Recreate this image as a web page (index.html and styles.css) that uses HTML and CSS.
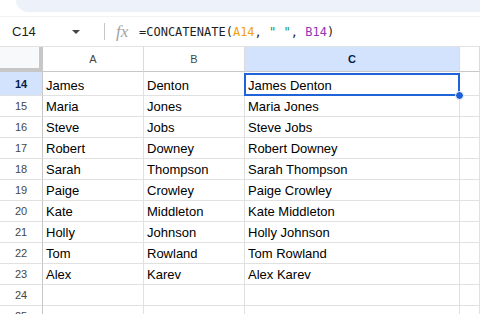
FILE: index.html
```html
<!DOCTYPE html>
<html lang="en">
<head>
    <meta charset="UTF-8">
    <title>Sheet - Concatenate</title>
    <link rel="stylesheet" href="styles.css">
</head>
<body>

    <!-- Toolbar edge -->
    <div class="toolbar"></div>

    <!-- Formula Bar -->
    <div class="formula-bar">
        <div class="name-box">
            <span class="cell-ref">C14</span>
            <span class="caret"></span>
        </div>
        <div class="divider"></div>
        <span class="fx">fx</span>
        <div class="formula">=CONCATENATE(<span class="ref-a">A14</span>, <span class="str">" "</span>, <span class="ref-b">B14</span>)</div>
    </div>

    <!-- Grid -->
    <div class="sheet">
        <div class="corner"></div>
        <div class="col-head">A</div>
        <div class="col-head">B</div>
        <div class="col-head active">C</div>
        <div class="col-head"></div>

        <div class="row-head active">14</div>
        <div class="cell">James</div>
        <div class="cell">Denton</div>
        <div class="cell selected">James Denton<span class="handle"></span></div>
        <div class="cell"></div>

        <div class="row-head">15</div>
        <div class="cell">Maria</div>
        <div class="cell">Jones</div>
        <div class="cell">Maria Jones</div>
        <div class="cell"></div>

        <div class="row-head">16</div>
        <div class="cell">Steve</div>
        <div class="cell">Jobs</div>
        <div class="cell">Steve Jobs</div>
        <div class="cell"></div>

        <div class="row-head">17</div>
        <div class="cell">Robert</div>
        <div class="cell">Downey</div>
        <div class="cell">Robert Downey</div>
        <div class="cell"></div>

        <div class="row-head">18</div>
        <div class="cell">Sarah</div>
        <div class="cell">Thompson</div>
        <div class="cell">Sarah Thompson</div>
        <div class="cell"></div>

        <div class="row-head">19</div>
        <div class="cell">Paige</div>
        <div class="cell">Crowley</div>
        <div class="cell">Paige Crowley</div>
        <div class="cell"></div>

        <div class="row-head">20</div>
        <div class="cell">Kate</div>
        <div class="cell">Middleton</div>
        <div class="cell">Kate Middleton</div>
        <div class="cell"></div>

        <div class="row-head">21</div>
        <div class="cell">Holly</div>
        <div class="cell">Johnson</div>
        <div class="cell">Holly Johnson</div>
        <div class="cell"></div>

        <div class="row-head">22</div>
        <div class="cell">Tom</div>
        <div class="cell">Rowland</div>
        <div class="cell">Tom Rowland</div>
        <div class="cell"></div>

        <div class="row-head">23</div>
        <div class="cell">Alex</div>
        <div class="cell">Karev</div>
        <div class="cell">Alex Karev</div>
        <div class="cell"></div>

        <div class="row-head">24</div>
        <div class="cell"></div>
        <div class="cell"></div>
        <div class="cell"></div>
        <div class="cell"></div>

        <div class="row-head">25</div>
        <div class="cell"></div>
        <div class="cell"></div>
        <div class="cell"></div>
        <div class="cell"></div>
    </div>

</body>
</html>
```

FILE: styles.css
```css
/* Basic Styles */
html, body {
    margin: 0;
    padding: 0;
}

body {
    width: 480px;
    height: 314px;
    overflow: hidden;
    background: #ffffff;
    font-family: "Liberation Sans", Arial, sans-serif;
    color: #000000;
}

/* Toolbar edge */
.toolbar {
    height: 12px;
    margin-left: 16px;
    background-color: #edf2fa;
    border-bottom-left-radius: 14px;
}

/* Formula Bar */
.formula-bar {
    height: 29px;
    margin-top: 4px;
    border-top: 1px solid #f3f3f3;
    border-bottom: 1px solid #e1e3e1;
    display: flex;
    align-items: center;
}

.name-box {
    width: 92px;
    padding-left: 12px;
    box-sizing: border-box;
    display: flex;
    align-items: center;
    justify-content: space-between;
    padding-right: 12px;
}

.cell-ref {
    font-size: 13px;
    color: #1f1f1f;
}

.caret {
    width: 0;
    height: 0;
    border-left: 4px solid transparent;
    border-right: 4px solid transparent;
    border-top: 4px solid #444746;
}

.divider {
    width: 1px;
    height: 17px;
    background-color: #c4c7c5;
    margin-left: 12px;
}

.fx {
    font-family: "Liberation Serif", serif;
    font-style: italic;
    font-size: 17px;
    color: #a0a4a8;
    margin-left: 11px;
    width: 23px;
}

.formula {
    font-family: "DejaVu Sans Mono", "Liberation Mono", monospace;
    font-size: 12px;
    color: #1f1f1f;
    white-space: pre;
}

.ref-a { color: #f2a20a; }
.str { color: #1e8e3e; }
.ref-b { color: #9334b6; }

/* Grid */
.sheet {
    display: grid;
    grid-template-columns: 43px 101px 101px 215px 1fr;
    grid-template-rows: 25px 24px;
    grid-auto-rows: 21px;
}

.sheet > div {
    box-sizing: border-box;
    border-right: 1px solid #e1e1e1;
    border-bottom: 1px solid #e1e1e1;
}

.corner {
    background-color: #f8f9fa;
    border-right: 4px solid #c7c7c7 !important;
    border-bottom: 4px solid #c7c7c7 !important;
}

.col-head {
    display: flex;
    align-items: center;
    justify-content: center;
    font-size: 11px;
    color: #444746;
    border-bottom-color: #c7c7c7 !important;
    border-right-color: #dadada !important;
}

.row-head {
    display: flex;
    align-items: center;
    justify-content: center;
    font-size: 11px;
    color: #444746;
    border-right-color: #c7c7c7 !important;
}

.col-head.active, .row-head.active {
    background-color: #d3e3fd;
    color: #041e49;
    font-weight: bold;
}

.cell {
    display: flex;
    align-items: flex-end;
    padding: 0 3px 2px;
    font-size: 13px;
    white-space: nowrap;
}

.cell.selected {
    position: relative;
}

.cell.selected::after {
    content: "";
    position: absolute;
    left: -1px;
    right: -1px;
    top: 1px;
    bottom: -1px;
    border: 2px solid #1f63d8;
}

.handle {
    position: absolute;
    right: -5px;
    bottom: -5px;
    width: 7px;
    height: 7px;
    border-radius: 50%;
    background-color: #1f5fd6;
    border: 1px solid #ffffff;
    z-index: 2;
}
```
